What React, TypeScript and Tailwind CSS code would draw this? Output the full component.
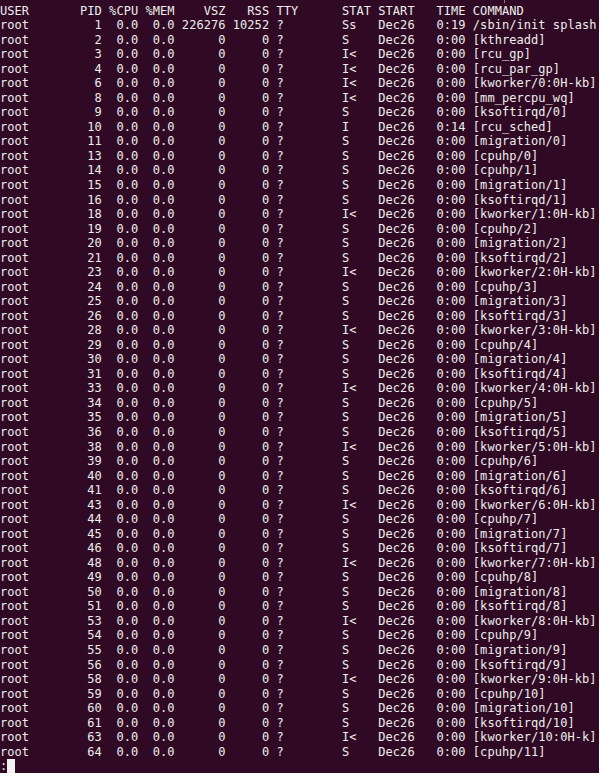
import React from "react";

type Row = [number, string, string, string];

const rows: Row[] = [
  [1, "Ss", "0:19", "/sbin/init splash"],
  [2, "S", "0:00", "[kthreadd]"],
  [3, "I<", "0:00", "[rcu_gp]"],
  [4, "I<", "0:00", "[rcu_par_gp]"],
  [6, "I<", "0:00", "[kworker/0:0H-kb]"],
  [8, "I<", "0:00", "[mm_percpu_wq]"],
  [9, "S", "0:00", "[ksoftirqd/0]"],
  [10, "I", "0:14", "[rcu_sched]"],
  [11, "S", "0:00", "[migration/0]"],
  [13, "S", "0:00", "[cpuhp/0]"],
  [14, "S", "0:00", "[cpuhp/1]"],
  [15, "S", "0:00", "[migration/1]"],
  [16, "S", "0:00", "[ksoftirqd/1]"],
  [18, "I<", "0:00", "[kworker/1:0H-kb]"],
  [19, "S", "0:00", "[cpuhp/2]"],
  [20, "S", "0:00", "[migration/2]"],
  [21, "S", "0:00", "[ksoftirqd/2]"],
  [23, "I<", "0:00", "[kworker/2:0H-kb]"],
  [24, "S", "0:00", "[cpuhp/3]"],
  [25, "S", "0:00", "[migration/3]"],
  [26, "S", "0:00", "[ksoftirqd/3]"],
  [28, "I<", "0:00", "[kworker/3:0H-kb]"],
  [29, "S", "0:00", "[cpuhp/4]"],
  [30, "S", "0:00", "[migration/4]"],
  [31, "S", "0:00", "[ksoftirqd/4]"],
  [33, "I<", "0:00", "[kworker/4:0H-kb]"],
  [34, "S", "0:00", "[cpuhp/5]"],
  [35, "S", "0:00", "[migration/5]"],
  [36, "S", "0:00", "[ksoftirqd/5]"],
  [38, "I<", "0:00", "[kworker/5:0H-kb]"],
  [39, "S", "0:00", "[cpuhp/6]"],
  [40, "S", "0:00", "[migration/6]"],
  [41, "S", "0:00", "[ksoftirqd/6]"],
  [43, "I<", "0:00", "[kworker/6:0H-kb]"],
  [44, "S", "0:00", "[cpuhp/7]"],
  [45, "S", "0:00", "[migration/7]"],
  [46, "S", "0:00", "[ksoftirqd/7]"],
  [48, "I<", "0:00", "[kworker/7:0H-kb]"],
  [49, "S", "0:00", "[cpuhp/8]"],
  [50, "S", "0:00", "[migration/8]"],
  [51, "S", "0:00", "[ksoftirqd/8]"],
  [53, "I<", "0:00", "[kworker/8:0H-kb]"],
  [54, "S", "0:00", "[cpuhp/9]"],
  [55, "S", "0:00", "[migration/9]"],
  [56, "S", "0:00", "[ksoftirqd/9]"],
  [58, "I<", "0:00", "[kworker/9:0H-kb]"],
  [59, "S", "0:00", "[cpuhp/10]"],
  [60, "S", "0:00", "[migration/10]"],
  [61, "S", "0:00", "[ksoftirqd/10]"],
  [63, "I<", "0:00", "[kworker/10:0H-k]"],
  [64, "S", "0:00", "[cpuhp/11]"],
];

const padL = (s: string, n: number) => s.padStart(n, " ");
const padR = (s: string, n: number) => s.padEnd(n, " ");

const header =
  "USER       PID %CPU %MEM    VSZ   RSS TTY      STAT START   TIME COMMAND";

const lines = [
  header,
  ...rows.map(([pid, stat, time, cmd]) => {
    const vsz = pid === 1 ? "226276" : "0";
    const rss = pid === 1 ? "10252" : "0";
    return (
      "root" +
      padL(String(pid), 10) +
      "  0.0" +
      "  0.0" +
      padL(vsz, 7) +
      padL(rss, 6) +
      " " +
      padR("?", 9) +
      padR(stat, 4) +
      " Dec26" +
      padL(time, 7) +
      " " +
      cmd
    );
  }),
];

export default function App() {
  return (
    <div
      className="relative w-full h-[773px] overflow-hidden bg-[#300a24] text-[#eeeeec] text-[12px] leading-[14.54px] tracking-[0.05px] pt-[3.6px]"
      style={{ fontFamily: '"DejaVu Sans Mono", "Liberation Mono", monospace' }}
    >
      <div className="absolute left-[504px] top-0 w-px h-[3px] bg-[#8a7a84]" />
      {lines.map((l, i) => (
        <div key={i} className="whitespace-pre h-[14.54px]">
          {l}
        </div>
      ))}
      <div className="flex h-[14.54px] whitespace-pre">
        <span>:</span>
        <span className="w-[7.3px] h-[14.54px] bg-[#f2f2f2]" />
      </div>
    </div>
  );
}
